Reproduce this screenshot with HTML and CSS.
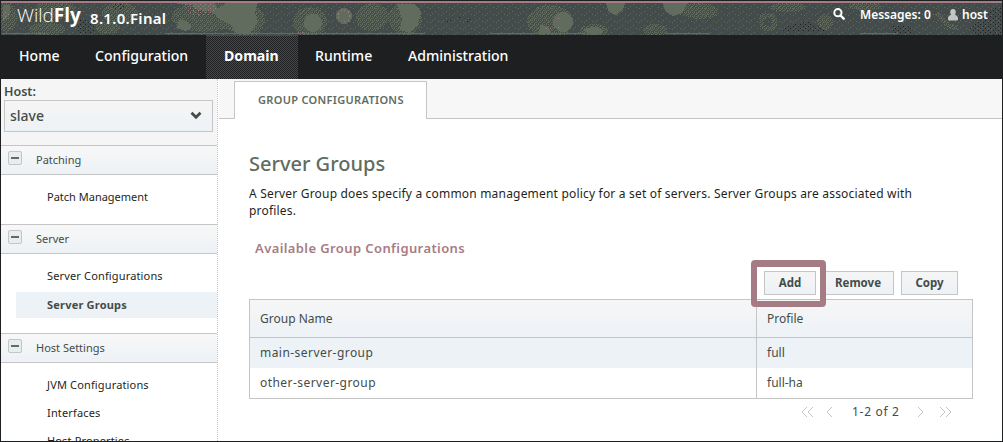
FILE: index.html
```
<!DOCTYPE html>
<html lang="en">
<head>
<meta charset="utf-8">
<title>WildFly 8.1.0.Final</title>
<link rel="stylesheet" href="styles.css">
</head>
<body>
<div class="window">
  <header class="banner">
    <svg class="camo" width="1001" height="32" viewBox="1 3 1001 32" aria-hidden="true">
      <defs>
        <pattern id="dots" width="4" height="4" patternUnits="userSpaceOnUse"><path fill="#616c5f" d="M0 0h1v1h-1zM2 0h1v1h-1zM1 1h1v1h-1zM3 2h1v1h-1zM0 2h1v1h-1zM2 3h1v1h-1z"/></pattern>
        <pattern id="sparse" width="11" height="7" patternUnits="userSpaceOnUse"><path fill="#616c5f" d="M1 1h1v1h-1zM6 4h1v1h-1zM9 0h1v1h-1zM3 6h1v1h-1z"/></pattern>
        <pattern id="dark" width="5" height="4" patternUnits="userSpaceOnUse"><path fill="#1e1f21" d="M0 0h1v1h-1zM3 2h1v1h-1z"/></pattern>
        <pattern id="rose" width="5" height="4" patternUnits="userSpaceOnUse"><path fill="#a67c84" d="M0 0h1v1h-1zM3 2h1v1h-1z"/></pattern>
      </defs>
      <rect x="1" y="3" width="1001" height="32" fill="url(#sparse)"/>
      <g fill="url(#dots)">
        <ellipse cx="6" cy="17" rx="11" ry="15"/><ellipse cx="55" cy="10" rx="21" ry="9"/><ellipse cx="47" cy="29" rx="18" ry="7"/>
        <ellipse cx="120" cy="13" rx="18" ry="11"/><ellipse cx="108" cy="28" rx="12" ry="6"/><ellipse cx="205" cy="17" rx="34" ry="15"/>
        <ellipse cx="245" cy="20" rx="20" ry="16"/><ellipse cx="310" cy="22" rx="17" ry="15"/><ellipse cx="372" cy="17" rx="16" ry="14"/>
        <ellipse cx="405" cy="18" rx="17" ry="17"/><ellipse cx="550" cy="21" rx="23" ry="16"/><ellipse cx="594" cy="31" rx="14" ry="7"/><ellipse cx="655" cy="30" rx="12" ry="6"/>
        <ellipse cx="700" cy="11" rx="18" ry="8"/><ellipse cx="788" cy="7" rx="17" ry="5"/><ellipse cx="825" cy="22" rx="8" ry="8"/><ellipse cx="865" cy="6" rx="16" ry="5"/>
      </g>
      <g fill="#616c5f">
        <path d="M172 3h42l4 6 8-6h32l-3 9 3 10-8 11h-14l-5-8-10-5-9-8-13-2-7-5z"/>
        <path d="M180 19l8 3 4 5-6 4-10-3z"/>
        <circle cx="313" cy="23" r="9"/><circle cx="344" cy="16" r="8"/>
        <path d="M397 4h18l6 8-3 12-9 9-9-3 2-12z"/><circle cx="563" cy="22" r="10"/><path d="M540 25l8 1 3 8h-12z"/>
        <ellipse cx="594" cy="31" rx="9" ry="4"/><path d="M606 3h19l-2 7-7 5-7-3z"/><path d="M663 3h25l-6 10-9 3-8-5z"/><path d="M3 5h7v9l-7 7z"/>
      </g>
      <g fill="none" stroke="url(#dots)" stroke-width="5"><circle cx="768" cy="22" r="7"/><path d="M937 13l12 13 9 2"/></g>
      <path fill="url(#rose)" d="M184 4h31l3 6-10 5h-17zM2 12h7v7h-7z"/>
      <circle cx="344" cy="16" r="6" fill="none" stroke="#a67c84" stroke-dasharray="1 3"/>
      <path d="M546 28h8M558 18h1M558 27h1M298 32h7" stroke="#a67c84" stroke-dasharray="1 3"/>
      <path fill="url(#dark)" d="M80 19h15v14h-18zM112 3h12v7h-12zM777 30l30-10 22 12h-45zM893 25l22 2-3 7h-19zM970 28l23-21h9v28h-26z"/>
      <path d="M447 22l4-2M459 17h1M467 22l5-6" stroke="#1e1f21" stroke-dasharray="1 2"/>
      <path d="M2 33.5h46M165 33.5h260M490 33.5h95M665 33.5h45M860 33.5h38" stroke="#616c5f"/>
    </svg>
    <div class="brand"><span class="logo">Wild<b>Fly</b></span><span class="version">8.1.0.Final</span></div>
    <div class="tools">
      <svg width="12" height="12" viewBox="0 0 12 12" class="search"><circle cx="4.9" cy="4.7" r="3.6" fill="none" stroke="#fff" stroke-width="2"/><path d="M7.5 7.5l3.2 3.2" stroke="#fff" stroke-width="2.4" stroke-linecap="round"/></svg>
      <span class="messages">Messages: 0</span>
      <svg width="10" height="12" viewBox="0 0 10 12" class="user"><path fill="#c5c5c5" d="M5 0C3.300 0 2.200 1.200 2.200 3C2.200 4.200 2.700 5.200 3.200 5.800C1.500 6.300 0 7.500 0 9V10.500L.8 11.500H9.200L10 10.500V9C10 7.500 8.500 6.300 6.800 5.800C7.300 5.200 7.800 4.200 7.800 3C7.800 1.200 6.700 0 5 0Z"/></svg>
      <span class="username">host</span>
    </div>
  </header>
  <nav class="nav">
    <a class="nav-home">Home</a><a class="nav-config">Configuration</a><a class="nav-domain active">Domain</a><a class="nav-runtime">Runtime</a><a class="nav-admin">Administration</a>
  </nav>
  <div class="body">
    <aside class="sidebar">
      <div class="host">
        <label>Host:</label>
        <div class="select"><span>slave</span><svg width="12" height="9" viewBox="0 0 12 9"><path d="M1.500 1.800L6 6.200 10.500 1.800" fill="none" stroke="#434c4a" stroke-width="2.800"/></svg></div>
      </div>
      <div class="section"><i class="toggle"></i><span>Patching</span></div>
      <div class="items items-patching"><a class="patch">Patch Management</a></div>
      <div class="section"><i class="toggle"></i><span>Server</span></div>
      <div class="items items-server"><a>Server Configurations</a><a class="selected">Server Groups</a></div>
      <div class="section"><i class="toggle"></i><span>Host Settings</span></div>
      <div class="items items-host"><a>JVM Configurations</a><a>Interfaces</a><a>Host Properties</a></div>
    </aside>
    <main class="main">
      <div class="tabs"><div class="tab">GROUP CONFIGURATIONS</div></div>
      <div class="content">
        <h1>Server Groups</h1>
        <p>A Server Group does specify a common management policy for a set of servers. Server Groups are associated with<br>profiles.</p>
        <h2>Available Group Configurations</h2>
        <div class="buttons">
          <div class="add-wrap"><button class="add">Add</button><div class="callout"></div></div>
          <button class="remove">Remove</button><button class="copy">Copy</button>
        </div>
        <div class="table">
          <div class="row head"><div>Group Name</div><div>Profile</div></div>
          <div class="row even"><div class="group">main-server-group</div><div>full</div></div>
          <div class="row"><div class="group">other-server-group</div><div>full-ha</div></div>
        </div>
        <div class="pager">
          <svg width="13" height="12" viewBox="0 0 13 12"><path d="M6 1L1 6l5 5M12 1L7 6l5 5"/></svg>
          <svg width="8" height="12" viewBox="0 0 8 12" class="prev"><path d="M6 1L1 6l5 5"/></svg>
          <span>1-2 of 2</span>
          <svg width="8" height="12" viewBox="0 0 8 12" class="next"><path d="M1 1l5 5-5 5"/></svg>
          <svg width="13" height="12" viewBox="0 0 13 12"><path d="M1 1l5 5-5 5M7 1l5 5-5 5"/></svg>
        </div>
      </div>
    </main>
  </div>
</div>
</body>
</html>
```
FILE: styles.css
```
* { box-sizing: border-box; }
body { margin: 0; font-family: "Noto Sans", "Open Sans", sans-serif; font-size: 12px; color: #1e1f21; }
.window { width: 1003px; height: 442px; overflow: hidden; border: 1px solid #1e1f21; background: #fff; display: flex; flex-direction: column; }
.banner { height: 34px; flex: none; border-top: 2px solid #a67c84; background: #434c4a; position: relative; display: flex; justify-content: space-between; color: #fff; }
.camo { position: absolute; left: 0; top: 0; shape-rendering: crispEdges; }
.brand { position: relative; display: flex; padding-left: 16px; white-space: nowrap; }
.logo { font-family: "Open Sans", sans-serif; font-size: 19px; line-height: 25px; width: 73px; font-weight: 300; letter-spacing: 0; }
.logo b { font-weight: 700; }
.version { font-size: 15px; font-weight: 600; line-height: 30px; letter-spacing: .3px; }
.tools { position: relative; display: flex; padding-right: 14px; line-height: 24px; font-size: 12px; font-weight: 600; white-space: nowrap; }
.search { margin: 5px 15px 0 0; }
.messages { width: 88px; }
.user { margin: 6px 4px 0 0; }
.username { width: 26px; }
.nav { height: 44px; flex: none; display: flex; background: #1e1f21; color: #fff; font-size: 14.1px; font-weight: 500; line-height: 41px; padding-left: 1px; }
.nav a { padding-left: 17px; white-space: nowrap; }
.nav-home { width: 76px; }
.nav-config { width: 128px; }
.nav-domain { width: 92px; }
.nav .active { padding-left: 18px; line-height: 39px; font-weight: 700; background-color: #303536; background-image: conic-gradient(#434c4a 25%, #1e1f21 0 50%, #434c4a 0 75%, #1e1f21 0); background-size: 2px 2px; border-top: 1px solid #434c4a; }
.nav-runtime { width: 92px; }
.nav .nav-admin { padding-left: 18px; }
.body { flex: 1; min-height: 0; display: flex; }
.sidebar { width: 217px; flex: none; overflow: hidden; border-right: 1px dotted #c5c5c5; }
.host { height: 66px; background: #f5f5f5; padding: 4px 4px 0 3px; color: #434c4a; }
.host label { display: block; height: 17px; line-height: 17px; font-size: 12.5px; font-weight: 600; }
.select { height: 32px; border: 1px solid #c5c5c5; background: linear-gradient(#f5f5f5, #edf2f6); display: flex; align-items: center; justify-content: space-between; padding: 0 10px 2px 5px; font-size: 14px; font-weight: 500; }
.section { height: 30px; border-top: 1px solid #c5c5c5; border-bottom: 1px solid #c5c5c5; background: linear-gradient(#f7f7f7, #edf2f6); display: flex; color: #434c4a; font-size: 11px; line-height: 28px; padding-left: 7px; }
.toggle { width: 14px; height: 14px; margin: 5px 14px 0 0; border: 1px solid #c5c5c5; border-radius: 2px; background: linear-gradient(#616c5f, #616c5f) center / 8px 2px no-repeat #e8edf0; }
.items { display: flex; flex-direction: column; gap: 3px; padding: 9px 0 0 15px; font-size: 11px; line-height: 26px; letter-spacing: .15px; }
.items a { height: 26px; padding-left: 31px; white-space: nowrap; }
.items .patch { letter-spacing: 0; }
.items-patching { height: 49px; }
.items-server { height: 79px; }
.items-host { gap: 2px; }
.items .selected { background: #edf2f6; color: #434c4a; font-weight: 700; letter-spacing: .2px; }
.main { flex: 1; min-width: 0; padding-left: 1px; }
.tabs { height: 40px; border-bottom: 1px solid #c5c5c5; background: #f7f7f7; padding: 2px 0 0 15px; }
.tab { width: 193px; height: 38px; border: 1px solid #c5c5c5; border-bottom: 0; background: #fff; color: #616c5f; font-size: 11px; font-weight: 600; line-height: 36px; padding-left: 23px; white-space: nowrap; letter-spacing: .32px; }
.content { padding: 30px 29px 0 30px; }
h1 { margin: 0; height: 30px; line-height: 30px; font-size: 20px; font-weight: 500; color: #616c5f; }
p { margin: 6px 0 0; font-size: 12px; line-height: 17px; white-space: nowrap; letter-spacing: .19px; }
h2 { margin: 20px 0 0 6px; height: 18px; line-height: 18px; font-size: 13px; font-weight: 600; color: #a67c84; letter-spacing: .4px; }
.buttons { height: 28px; margin-top: 14px; padding-right: 15px; display: flex; justify-content: flex-end; }
button { height: 24px; padding: 0 0 1px; border: 1px solid #c5c5c5; background: linear-gradient(#f5f5f5, #edf2f6); color: #434c4a; font: 700 11.5px "Noto Sans", sans-serif; }
.add-wrap { position: relative; width: 52px; height: 24px; margin-right: 6px; }
.add { width: 52px; }
.callout { position: absolute; left: -13px; top: -11px; width: 75px; height: 47px; border: 6px solid #a67c84; border-top-width: 7px; border-radius: 4px; }
.remove { width: 72px; margin-right: 7px; }
.copy { width: 57px; }
.table { width: 724px; height: 100px; border: 1px solid #c5c5c5; color: #434c4a; }
.row { display: grid; grid-template-columns: 506px 1fr; height: 30px; line-height: 29px; }
.row div { padding-left: 10px; }
.row div + div { border-left: 1px solid #c5c5c5; }
.row .group { letter-spacing: .45px; }
.head { height: 38px; line-height: 37px; background: linear-gradient(#f6f6f6, #edf2f6); border-bottom: 1px solid #c5c5c5; }
.even { background: #edf2f6; }
.pager { display: flex; align-items: center; height: 25px; padding: 0 21px 0 0; justify-content: flex-end; color: #434c4a; }
.pager svg { fill: none; stroke: #c5c5c5; }
.pager span { width: 49px; white-space: nowrap; letter-spacing: .7px; }
.prev { margin: 0 18px 0 12px; }
.next { margin: 0 14px 0 16px; }
```
